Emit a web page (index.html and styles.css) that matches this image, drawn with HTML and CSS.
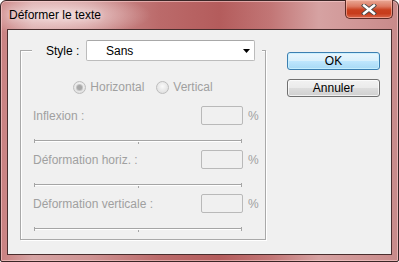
FILE: index.html
```html
<!DOCTYPE html>
<html>
<head>
<meta charset="utf-8">
<link rel="stylesheet" href="styles.css">
</head>
<body>
<div class="window">
  <div class="titlebar">
    <span class="title">Déformer le texte</span>
    <button class="close" aria-label="Fermer">
      <svg width="16" height="11" viewBox="0 0 16 11">
        <path d="M3 1.5 L13 9.5 M13 1.5 L3 9.5" stroke="#4a4a4a" stroke-width="4.2" stroke-linecap="square" fill="none"/>
        <path d="M3 1.5 L13 9.5 M13 1.5 L3 9.5" stroke="#ffffff" stroke-width="2.4" stroke-linecap="square" fill="none"/>
      </svg>
    </button>
  </div>
  <div class="client">
    <fieldset class="group">
      <legend class="legend">
        <span class="style-label">Style :</span>
        <div class="select">
          <span>Sans</span>
          <svg class="arrow" width="7" height="4" viewBox="0 0 7 4"><path d="M0 0 H7 L3.5 4 Z" fill="#000"/></svg>
        </div>
      </legend>
      <div class="radios">
        <label class="radio"><span class="dot checked"></span>Horizontal</label>
        <label class="radio"><span class="dot"></span>Vertical</label>
      </div>
      <div class="param">
        <div class="param-row"><span class="plabel">Inflexion :</span><span class="field"></span><span class="pct">%</span></div>
        <svg class="slider" width="208" height="6" viewBox="0 0 208 6"><path d="M0 2.5 H208 M0.5 1 V5 M207.5 1 V5 M104.5 2 V6" stroke="#a5a5a5" stroke-width="1" fill="none"/><path d="M1 3.5 H207" stroke="#ffffff" stroke-width="1"/></svg>
      </div>
      <div class="param">
        <div class="param-row"><span class="plabel">Déformation horiz. :</span><span class="field"></span><span class="pct">%</span></div>
        <svg class="slider" width="208" height="6" viewBox="0 0 208 6"><path d="M0 2.5 H208 M0.5 1 V5 M207.5 1 V5 M104.5 2 V6" stroke="#a5a5a5" stroke-width="1" fill="none"/><path d="M1 3.5 H207" stroke="#ffffff" stroke-width="1"/></svg>
      </div>
      <div class="param">
        <div class="param-row"><span class="plabel">Déformation verticale :</span><span class="field"></span><span class="pct">%</span></div>
        <svg class="slider" width="208" height="6" viewBox="0 0 208 6"><path d="M0 2.5 H208 M0.5 1 V5 M207.5 1 V5 M104.5 2 V6" stroke="#a5a5a5" stroke-width="1" fill="none"/><path d="M1 3.5 H207" stroke="#ffffff" stroke-width="1"/></svg>
      </div>
    </fieldset>
    <div class="buttons">
      <button class="btn btn-default">OK</button>
      <button class="btn">Annuler</button>
    </div>
  </div>
</div>
</body>
</html>
```
FILE: styles.css
```css
* { box-sizing: border-box; }
html, body { margin: 0; padding: 0; }
body {
  width: 399px;
  height: 262px;
  overflow: hidden;
  font-family: "Liberation Sans", Arial, sans-serif;
  font-size: 12px;
  background: #fff;
}
.window {
  width: 399px;
  height: 262px;
  border: 1px solid #3a2626;
  border-radius: 6px 6px 2px 2px;
  background:
    radial-gradient(ellipse 90px 22px at 60px 14px, rgba(255,240,240,0.75), rgba(255,240,240,0) 100%),
    linear-gradient(to right, #c98080 0%, #d6a4a4 8%, #cf9494 22%, #bb6a6a 40%, #b45c5c 55%, #c27676 68%, #d6a2a2 80%, #d09696 90%, #c88a8a 100%);
  box-shadow: inset 0 0 0 1px rgba(255, 215, 215, 0.55);
  display: flex;
  flex-direction: column;
}
.titlebar {
  height: 28px;
  display: flex;
  align-items: flex-start;
  justify-content: space-between;
  padding-left: 8px;
  padding-right: 5px;
}
.title {
  margin-top: 7px;
  font-size: 12px;
  color: #000;
  text-shadow: 0 0 6px rgba(255,255,255,0.7);
}
.close {
  width: 48px;
  height: 19px;
  margin: -1px 0 0 0;
  padding: 0;
  border: 1px solid #5b2a26;
  border-top: none;
  border-radius: 0 0 5px 5px;
  background: linear-gradient(to bottom, #e9a996 0%, #dd7a62 35%, #c9401f 55%, #c73c1c 75%, #d9664a 100%);
  box-shadow: inset 0 0 0 1px rgba(255,200,190,0.55);
  display: flex;
  align-items: center;
  justify-content: center;
}
.close svg { display: block; margin-top: 1px; }
.client {
  flex: 1;
  margin: 0 6px 6px 6px;
  border: 1px solid #4a2e2e;
  background: #f0f0f0;
  display: flex;
  align-items: flex-start;
  padding: 10px 0 0 12px;
}
.group {
  margin: 0;
  padding: 0 0 0 12px;
  width: 246px;
  height: 200px;
  border: 1px solid #a9a9a9;
  box-shadow: 1px 1px 0 #fff, inset 1px 1px 0 #fff;
  min-width: 0;
}
.legend {
  margin-left: -1px;
  padding: 0 7px 0 14px;
  display: flex;
  align-items: center;
  background: #f0f0f0;
}
.style-label {
  color: #000;
  width: 40px;
}
.select {
  width: 169px;
  height: 21px;
  background: #fff;
  border: 1px solid #bcbcbc;
  border-top-color: #a8a8a8;
  border-radius: 2px;
  display: flex;
  align-items: center;
  justify-content: space-between;
  padding: 0 4px 0 19px;
  color: #000;
}
.arrow { display: block; }
.radios {
  margin: 19px 0 0 -12px;
  height: 14px;
  display: flex;
  justify-content: center;
  gap: 12px;
  color: #a0a0a0;
}
.radio {
  display: flex;
  align-items: center;
  gap: 4px;
}
.dot {
  width: 13px;
  height: 13px;
  border-radius: 50%;
  border: 1px solid #bdbdbd;
  background: radial-gradient(circle at 50% 40%, #fafafa 0%, #e6e6e6 60%, #d8d8d8 100%);
  display: flex;
  align-items: center;
  justify-content: center;
}
.dot.checked::after {
  content: "";
  width: 5px;
  height: 5px;
  border-radius: 50%;
  background: #a8a8a8;
  box-shadow: 0 0 0 1px #c4c4c4;
}
.param { margin-top: 12px; }
.param + .param { margin-top: 6px; }
.param-row {
  height: 19px;
  display: flex;
  align-items: center;
  color: #a0a0a0;
}
.plabel { width: 168px; }
.field {
  width: 42px;
  height: 19px;
  border: 1px solid #b9b9b9;
  border-radius: 2px;
  background: #f0f0f0;
}
.pct { margin-left: 5px; }
.slider {
  display: block;
  margin: 13px 0 0 1px;
}
.buttons {
  margin: 12px 0 0 21px;
  display: flex;
  flex-direction: column;
  gap: 9px;
}
.btn {
  width: 93px;
  height: 18px;
  padding: 0;
  font-family: "Liberation Sans", Arial, sans-serif;
  font-size: 12px;
  color: #000;
  border: 1px solid #707070;
  border-radius: 3px;
  background: linear-gradient(to bottom, #f2f2f2 0%, #ebebeb 48%, #dddddd 52%, #cfcfcf 100%);
  box-shadow: inset 0 0 0 1px rgba(255,255,255,0.7);
  line-height: 16px;
}
.btn-default {
  border-color: #3c7fb1;
  background: linear-gradient(to bottom, #eaf6fd 0%, #d9f0fc 48%, #bee6fd 52%, #a7d9f5 100%);
  box-shadow: inset 0 0 0 1px rgba(200,240,255,0.9);
}
```
